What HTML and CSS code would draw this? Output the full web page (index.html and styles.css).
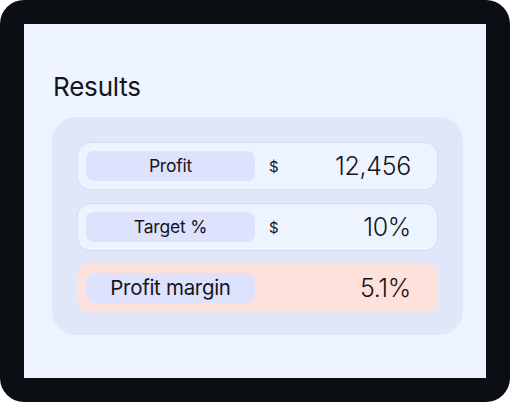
FILE: index.html
```html
<!DOCTYPE html>
<html lang="en">
<head>
  <meta charset="UTF-8" />
  <title>Results</title>
  <link rel="stylesheet" href="styles.css">
</head>
<body>

  <div class="frame">
    <div class="panel">
      <h1>Results</h1>

      <div class="results-card">
        <div class="row">
          <div class="label">Profit</div>
          <span class="currency">$</span>
          <span class="value">12,456</span>
        </div>

        <div class="row">
          <div class="label">Target %</div>
          <span class="currency">$</span>
          <span class="value">10%</span>
        </div>

        <div class="row highlight">
          <div class="label">Profit margin</div>
          <span class="value">5.1%</span>
        </div>
      </div>
    </div>
  </div>

</body>
</html>
```

FILE: styles.css
```css
body {
  margin: 0;
  font-family: 'Inter', 'Lato', sans-serif;
  color: #14161c;
}

.frame {
  width: 510px;
  height: 402px;
  box-sizing: border-box;
  padding: 24px;
  background: #0b0e13;
  border-radius: 24px;
}

.panel {
  height: 100%;
  background: #eef4ff;
  padding: 0 23px 0 28px;
  box-sizing: border-box;
  overflow: hidden;
}

h1 {
  margin: 0;
  padding: 47px 0 0 1px;
  height: 46px;
  font-size: 26px;
  font-weight: 400;
  letter-spacing: -0.2px;
  line-height: 32px;
}

.results-card {
  background: #e1e7f8;
  border-radius: 24px;
  padding: 25px 25px 23px 25px;
  display: flex;
  flex-direction: column;
  gap: 13px;
}

.row {
  display: flex;
  align-items: center;
  height: 48px;
  box-sizing: border-box;
  padding: 0 26px 0 8px;
  background: #eef4ff;
  border: 1px solid #d2ddf4;
  border-radius: 13px;
}

.label {
  width: 169px;
  height: 30px;
  line-height: 30px;
  background: #dfe2fc;
  border-radius: 8px;
  text-align: center;
  font-size: 17.5px;
  letter-spacing: -0.2px;
}

.currency {
  margin-left: 14px;
  font-size: 15px;
}

.value {
  margin-left: auto;
  font-size: 25px;
  font-weight: 300;
  letter-spacing: -0.3px;
}

.row.highlight {
  background: #ffe0db;
  border-color: #ffe0db;
}

.row.highlight .label {
  font-size: 20.5px;
  letter-spacing: -0.3px;
}
```
